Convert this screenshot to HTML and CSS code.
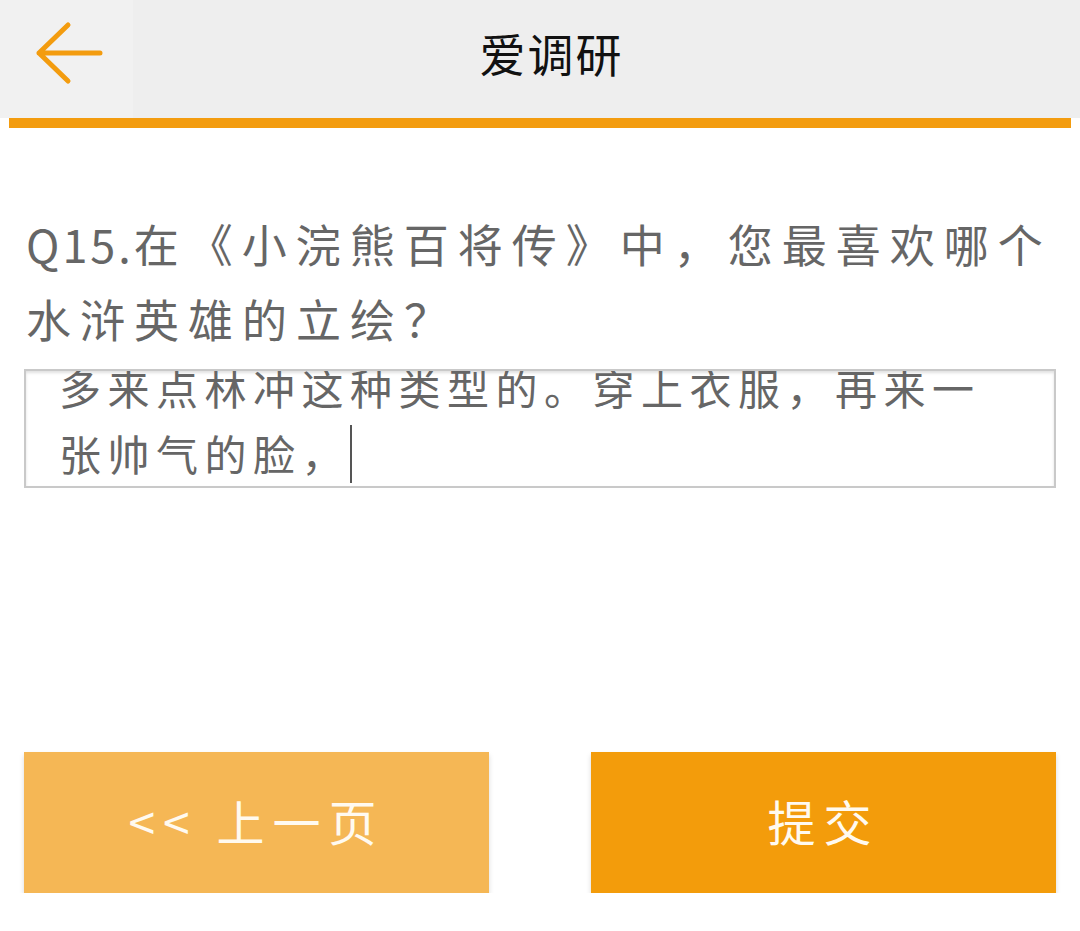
FILE: index.html
```html
<!DOCTYPE html>
<html lang="zh-CN">

<head>
    <meta charset="UTF-8">
    <meta name="viewport" content="width=device-width, initial-scale=1.0">
    <title>爱调研</title>
    <link rel="stylesheet" href="styles.css">
</head>

<body>
    <div class="cabecera">
        <div class="volver">
            <svg width="133" height="118" viewBox="0 0 133 118">
                <path d="M39 53 H100 M68 25 L39 53 L68 81" fill="none" stroke="#f39c0f" stroke-width="5" stroke-linecap="round" stroke-linejoin="round" />
            </svg>
        </div>
        <h1 class="titulo">爱调研</h1>
    </div>
    <div class="barra"></div>

    <div class="contenido">
        <p class="pregunta"><span class="numero">Q15.</span>在《小浣熊百将传》中，您最喜欢哪个<br>水浒英雄的立绘？</p>
        <div class="respuesta">
            <div class="texto">多来点林冲这种类型的。穿上衣服，再来一<br>张帅气的脸，<span class="cursor"></span></div>
        </div>
        <div class="botones">
            <div class="boton anterior">&lt;&lt; 上一页</div>
            <div class="boton enviar">提交</div>
        </div>
    </div>
</body>

</html>
```

FILE: styles.css
```css
body {
    margin: 0;
    background-color: #ffffff;
    font-family: "Noto Sans CJK SC", "Noto Sans", sans-serif;
}

.cabecera {
    display: flex;
    height: 118px;
    background-color: #eeeeee;
}

.volver {
    width: 133px;
    height: 118px;
    background-color: #f1f1f1;
}

.volver svg {
    display: block;
}

.titulo {
    flex: 1;
    margin: 0;
    padding-right: 110px;
    text-align: center;
    font-size: 46px;
    font-weight: normal;
    line-height: 104px;
    letter-spacing: 2px;
    color: #111111;
}

.barra {
    height: 10px;
    margin: 0 9px;
    background-color: #f39c0f;
}

.contenido {
    padding: 0 24px;
}

.pregunta {
    margin: 78px -20px 0 2px;
    font-size: 45px;
    line-height: 75px;
    letter-spacing: 9px;
    white-space: nowrap;
    color: #666666;
}

.numero {
    letter-spacing: 3px;
}

.respuesta {
    margin-top: 13px;
    height: 115px;
    border: 2px solid #c9c9c9;
    box-shadow: inset 0 2px 3px rgba(0, 0, 0, 0.12);
    overflow: hidden;
}

.texto {
    margin-top: -17px;
    padding-left: 33px;
    font-size: 42px;
    line-height: 66px;
    letter-spacing: 6.5px;
    color: #666666;
}

.cursor {
    display: inline-block;
    width: 0;
    height: 58px;
    border-left: 2px solid #555555;
    vertical-align: -12px;
}

.botones {
    display: flex;
    justify-content: space-between;
    margin-top: 264px;
}

.boton {
    width: 465px;
    height: 141px;
    line-height: 136px;
    text-align: center;
    font-size: 48px;
    letter-spacing: 8px;
    color: #fffaf0;
    box-shadow: 0 3px 5px rgba(0, 0, 0, 0.15);
}

.anterior {
    background-color: #f5b755;
}

.enviar {
    background-color: #f39c0b;
}
```
